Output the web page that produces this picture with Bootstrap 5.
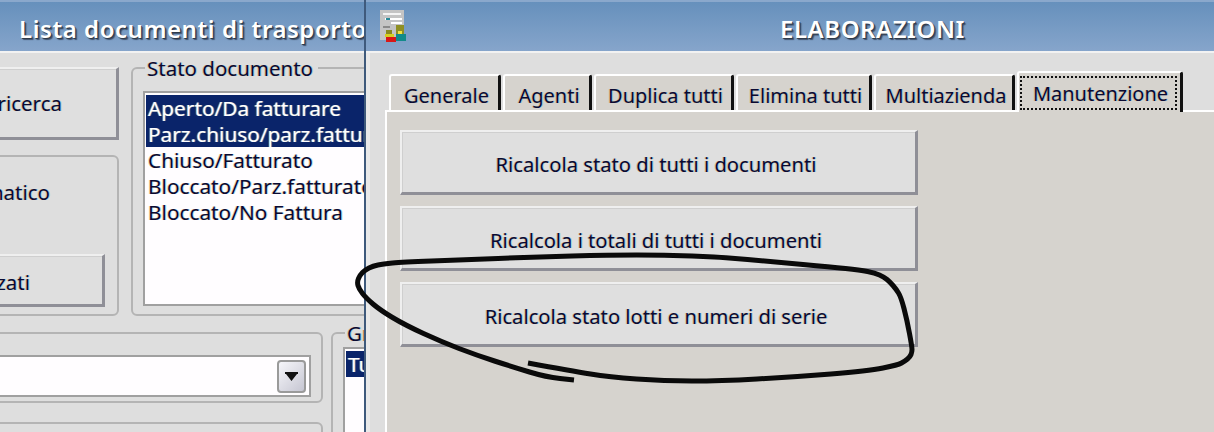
<!DOCTYPE html>
<html lang="it">
<head>
    <meta charset="UTF-8">
    <meta name="viewport" content="width=device-width, initial-scale=1.0">
    <title>Elaborazioni</title>
    <link rel="stylesheet" href="https://cdn.jsdelivr.net/npm/bootstrap@5.3.0/dist/css/bootstrap.min.css">
    <style>
        html, body { height: 432px; overflow: hidden; }
        body {
            position: relative;
            background: #dedede;
            color: #0a0a32;
            font-family: "Noto Sans", "Liberation Sans", sans-serif;
            font-size: 20px;
            line-height: 26px;
            text-shadow: -1px 0 rgba(225, 160, 70, .45), 1px 0 rgba(90, 190, 230, .45);
        }
        .win-left { width: 364px; height: 432px; overflow: hidden; flex: none; font-size: 20.5px; }
        .win-sep { width: 2px; flex: none; background: #3f5a7c; }
        .win-right { flex: 1 1 auto; height: 432px; overflow: hidden; display: flex; flex-direction: column; }
        .title-bar {
            height: 53px;
            flex: none;
            background: linear-gradient(#6690bc, #86a5cb);
            border-top: 2px solid #8aa8cc;
            border-bottom: 2px solid #f2f2f2;
            color: #fff;
            font-weight: 600;
            font-size: 24px;
            padding-top: 4px;
            white-space: nowrap;
            text-shadow: 1px 1px 0 #2f3a4a, 2px 2px 1px rgba(40, 50, 70, .7);
        }
        .title-left { padding-left: 19px; letter-spacing: .55px; }
        .title-right { padding-left: 374px; letter-spacing: .55px; }
        .win-icon { margin-left: 14px; margin-top: 4px; }
        .left-body { padding: 14px 0 0 0; }
        .w95-btn {
            background: #dfdfdf;
            border-style: solid;
            border-width: 2px 3px 3px 2px;
            border-color: #efefef #8f8f97 #8f8f97 #efefef;
            box-shadow: inset 1px 1px 0 #cfcfcf;
            color: inherit;
            font: inherit;
            text-shadow: inherit;
            padding: 3px 0 0 0;
            border-radius: 0;
        }
        .grp-box {
            position: relative;
            border: 2px solid #b4b4b4;
            border-radius: 6px;
        }
        .grp-label {
            position: absolute;
            top: -14px;
            left: 12px;
            background: #dedede;
            padding: 0 5px 0 2px;
            white-space: nowrap;
        }
        .col-a { width: 159px; margin-left: -40px; flex: none; }
        .btn-ricerca { height: 73px; width: 100%; text-align: right; padding: 0 54px 0 0; margin-bottom: 15px; }
        .box-auto { height: 161px; border-radius: 6px; }
        .txt-matico { padding: 22px 67px 0 0; text-align: right; height: 97px; }
        .btn-zati { height: 53px; width: 143px; margin-left: 0; text-align: right; padding-right: 72px; }
        .box-stato { height: 249px; width: 300px; margin-left: 12px; flex: none; padding: 22px 0 0 10px; }
        .w95-list {
            background: #fffdff;
            border: 2px solid #a0a0a0;
            padding: 2px 0 0 1px;
            white-space: nowrap;
            overflow: hidden;
            margin: 0;
            list-style: none;
            font-size: 20.8px;
        }
        .list-stato { height: 215px; border-right: 0; }
        .w95-list li { padding-left: 2px; }
        .w95-list li.sel { background: #0a246a; color: #fff; }
        .row-b { margin-top: 16px; }
        .col-c { width: 333px; margin-left: -10px; flex: none; }
        .box-combo { height: 71px; padding: 21px 10px 0 0; margin-bottom: 19px; }
        .combo-field {
            height: 42px;
            background: #fffdff;
            border: 2px solid #a0a0a0;
            border-left: 0;
            padding: 3px 3px 2px 0;
        }
        .combo-arrow {
            width: 29px;
            height: 33px;
            margin-left: auto;
            border: 2px solid #9a9a9a;
            border-radius: 4px;
            background: linear-gradient(135deg, #f6f6fa, #c6c6d2);
        }
        .box-next { height: 60px; }
        .box-gruppo { width: 100px; height: 140px; margin-left: 8px; padding: 13px 0 0 10px; flex: none; }
        .list-gruppo { height: 120px; border-right: 0; }
        .right-body { flex: 1 1 auto; display: flex; flex-direction: column; background: #dedede; padding-top: 18px; border-left: 4px solid #e9e9e9; }
        .tab-panel {
            flex: 1 1 auto;
            margin-left: 15px;
            background: #d6d3ce;
            border-top: 2px solid #fff;
            border-left: 2px solid #fff;
            padding: 18px 0 0 13px;
        }
        .tab-strip { margin-left: 19px; gap: 2px; height: 39px; flex: none; align-items: flex-end; flex-wrap: nowrap; }
        .tab-lnk {
            display: block;
            height: 36px;
            background: #d6d3ce;
            border-style: solid;
            border-width: 2px 3px 0 2px;
            border-color: #fff #111 #fff #fff;
            border-radius: 3px 3px 0 0;
            color: inherit;
            padding: 7px 0 0 4px;
            text-align: center;
            text-decoration: none;
            white-space: nowrap;
        }
        .tab-lnk:hover { color: inherit; }
        .tab-w1 { width: 112px; }
        .tab-w2 { width: 89px; }
        .tab-w3 { width: 140px; }
        .tab-w4 { width: 136px; }
        .tab-w5 { width: 141px; }
        .tab-on { width: 166px; height: 41px; margin-bottom: -2px; padding: 3px 3px 0 1px; position: relative; z-index: 1; }
        .tab-dots { display: block; height: 34px; border: 2px dotted #111; line-height: 32px; padding-left: 4px; }
        .op-btn { display: block; width: 518px; height: 65px; margin-bottom: 11px; text-align: center; padding-right: 5px; font-size: 20.2px; }
        .scribble { position: absolute; left: 0; top: 0; pointer-events: none; z-index: 5; }
    </style>
</head>
<body>
    <div class="d-flex">
        <!-- finestra dietro -->
        <div class="win-left">
            <div class="title-bar title-left d-flex align-items-center">Lista documenti di trasporto</div>
            <div class="left-body">
                <div class="d-flex">
                    <div class="col-a">
                        <button type="button" class="w95-btn btn-ricerca">ricerca</button>
                        <div class="grp-box box-auto">
                            <div class="txt-matico">matico</div>
                            <button type="button" class="w95-btn btn-zati">zati</button>
                        </div>
                    </div>
                    <div class="grp-box box-stato">
                        <span class="grp-label">Stato documento</span>
                        <ul class="w95-list list-stato">
                            <li class="sel">Aperto/Da fatturare</li>
                            <li class="sel">Parz.chiuso/parz.fatturato</li>
                            <li>Chiuso/Fatturato</li>
                            <li>Bloccato/Parz.fatturato</li>
                            <li>Bloccato/No Fattura</li>
                        </ul>
                    </div>
                </div>
                <div class="d-flex row-b">
                    <div class="col-c">
                        <div class="grp-box box-combo">
                            <div class="combo-field d-flex">
                                <div class="combo-arrow d-flex align-items-center justify-content-center">
                                    <svg width="13" height="9" viewBox="0 0 13 9"><path d="M0 0H13V2H0ZM1 2H12L6.5 9Z" fill="#111"/></svg>
                                </div>
                            </div>
                        </div>
                        <div class="grp-box box-next"></div>
                    </div>
                    <div class="grp-box box-gruppo">
                        <span class="grp-label">Gruppo</span>
                        <ul class="w95-list list-gruppo">
                            <li class="sel">Tutti</li>
                        </ul>
                    </div>
                </div>
            </div>
        </div>
        <div class="win-sep"></div>

        <!-- finestra elaborazioni -->
        <div class="win-right">
            <div class="title-bar d-flex">
                <svg class="win-icon flex-none" width="26" height="33" viewBox="0 0 26 33" shape-rendering="crispEdges">
                    <rect x="0" y="0" width="24" height="30" fill="#c4c4c4"/>
                    <rect x="3" y="3" width="18" height="2" fill="#f4f4f4"/>
                    <rect x="5" y="8" width="17" height="2" fill="#fff"/>
                    <rect x="6" y="8" width="4" height="2" fill="#2a8a9a"/>
                    <rect x="11" y="12" width="11" height="2" fill="#fff"/>
                    <rect x="3" y="16" width="7" height="2" fill="#8a8a8a"/>
                    <rect x="6" y="20" width="6" height="4" fill="#8a8a20"/>
                    <rect x="16" y="15" width="8" height="9" fill="#8f8f22"/>
                    <rect x="5" y="24" width="9" height="3" fill="#d8d020"/>
                    <rect x="18" y="21" width="4" height="3" fill="#f0e040"/>
                    <rect x="6" y="27" width="10" height="5" fill="#d81818"/>
                    <rect x="16" y="24" width="10" height="7" fill="#128a8a"/>
                </svg>
                <div class="title-right d-flex align-items-center">ELABORAZIONI</div>
            </div>
            <div class="right-body">
                <ul class="nav tab-strip">
                    <li class="nav-item"><a class="tab-lnk tab-w1" href="#">Generale</a></li>
                    <li class="nav-item"><a class="tab-lnk tab-w2" href="#">Agenti</a></li>
                    <li class="nav-item"><a class="tab-lnk tab-w3" href="#">Duplica tutti</a></li>
                    <li class="nav-item"><a class="tab-lnk tab-w4" href="#">Elimina tutti</a></li>
                    <li class="nav-item"><a class="tab-lnk tab-w5" href="#">Multiazienda</a></li>
                    <li class="nav-item"><a class="tab-lnk tab-on" href="#"><span class="tab-dots">Manutenzione</span></a></li>
                </ul>
                <div class="tab-panel">
                    <button type="button" class="w95-btn op-btn">Ricalcola stato di tutti i documenti</button>
                    <button type="button" class="w95-btn op-btn">Ricalcola i totali di tutti i documenti</button>
                    <button type="button" class="w95-btn op-btn">Ricalcola stato lotti e numeri di serie</button>
                </div>
            </div>
        </div>
    </div>

    <svg class="scribble" width="1214" height="432" viewBox="0 0 1214 432">
        <path fill="none" stroke="#0a0a0a" stroke-width="5" stroke-linejoin="round"
              d="M574 380L560 378.5Q546 377 529.5 372Q513 367 494.5 361Q476 355 459 348.5Q442 342 423.5 333.5Q405 325 392.5 317.5Q380 310 373 304Q366 298 362.5 293.5Q359 289 358 285.5Q357 282 358.5 278.5Q360 275 362.5 272.5Q365 270 369 268Q373 266 378 265Q383 264 392.5 263Q402 262 431.5 261Q461 260 498 258.5Q535 257 572 256Q609 255 636.5 255Q664 255 692 256Q720 257 747.5 259.5Q775 262 803 264.5Q831 267 845.5 268.5Q860 270 867.5 271.5Q875 273 879.5 275Q884 277 887 279.5Q890 282 893 285.5Q896 289 898.5 293Q901 297 904 308.5Q907 320 909.5 333.5Q912 347 912 349.5Q912 352 911 354.5Q910 357 907.5 359Q905 361 901.5 363Q898 365 883 368Q868 371 831 374Q794 377 757 379Q720 381 692 381Q664 381 636.5 379Q609 377 590.5 374Q572 371 528 363"/>
    </svg>
</body>
</html>
